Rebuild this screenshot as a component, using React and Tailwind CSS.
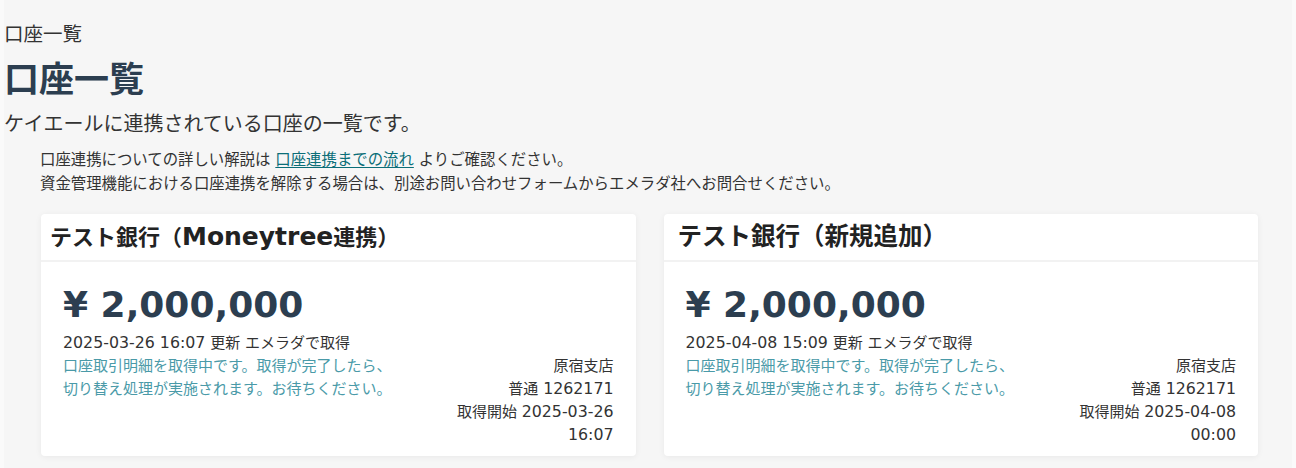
const accounts = [
  {
    name: (
      <>
        テスト銀行（<span className="text-[25px]">Moneytree</span>連携）
      </>
    ),
    titleClass: "text-[22px] pl-[9px]",
    amount: "¥ 2,000,000",
    date: "2025-03-26 16:07",
    number: "1262171",
    started: "2025-03-26",
    startedTime: "16:07",
  },
  {
    name: "テスト銀行（新規追加）",
    titleClass: "text-[24.5px] pl-[14px]",
    amount: "¥ 2,000,000",
    date: "2025-04-08 15:09",
    number: "1262171",
    started: "2025-04-08",
    startedTime: "00:00",
  },
];

// latin parts render a little larger than the CJK text around them
const Num = ({ children }) => <span className="text-[15.8px] leading-none">{children}</span>;

const AccountCard = ({ account }) => (
  <div className="bg-white rounded-[4px] shadow-[0_1px_6px_rgba(0,0,0,0.06)]">
    <div className="h-[48px] flex items-center border-b-2 border-[#f2f2f2]">
      <h2 className={`font-bold text-[#222] ${account.titleClass}`}>{account.name}</h2>
    </div>
    <div className="px-[22px] pt-[21px] pb-[9px]">
      <div className="text-[36px] leading-[44px] font-bold text-[#2c3e50]">
        {account.amount}
      </div>
      <div className="text-[15px] leading-[23px] text-[#333] mt-[5px]">
        <Num>{account.date}</Num> 更新 エメラダで取得
      </div>
      <div className="flex justify-between text-[15px] leading-[23px]">
        <p className="text-[#4a9aa8]">
          口座取引明細を取得中です。取得が完了したら、
          <br />
          切り替え処理が実施されます。お待ちください。
        </p>
        <div className="w-[166px] text-right text-[#333]">
          <div>原宿支店</div>
          <div>
            普通 <Num>{account.number}</Num>
          </div>
          <div>
            取得開始 <Num>{account.started}</Num>
          </div>
          <div>
            <Num>{account.startedTime}</Num>
          </div>
        </div>
      </div>
    </div>
  </div>
);

export default function App() {
  return (
    <div
      className="min-h-[468px] bg-[#fafafa] px-[4px]"
      style={{ fontFamily: '"DejaVu Sans", "Noto Sans CJK JP", sans-serif' }}
    >
      <div className="min-h-[468px] bg-[#f6f6f6] pt-[22px] pb-[12px] text-[#2c3e50]">
        <div className="text-[19.5px] leading-[26px] text-[#333]">口座一覧</div>
        <h1 className="text-[35px] leading-[48px] font-bold mt-[8px]">口座一覧</h1>
        <p className="text-[20px] leading-[30px] text-[#333] mt-[5px]">
          ケイエールに連携されている口座の一覧です。
        </p>
        <div className="pl-[36px] mt-[9px] text-[15.4px] leading-[24px] text-[#333]">
          <p>
            口座連携についての詳しい解説は{" "}
            <a href="#" className="text-[#0b6e78] underline underline-offset-2">
              口座連携までの流れ
            </a>{" "}
            よりご確認ください。
          </p>
          <p>
            資金管理機能における口座連携を解除する場合は、別途お問い合わせフォームからエメラダ社へお問合せください。
          </p>
        </div>
        <div className="grid grid-cols-2 gap-[28px] pl-[37px] pr-[34px] mt-[18px]">
          {accounts.map((a) => (
            <AccountCard key={a.date} account={a} />
          ))}
        </div>
      </div>
    </div>
  );
}
